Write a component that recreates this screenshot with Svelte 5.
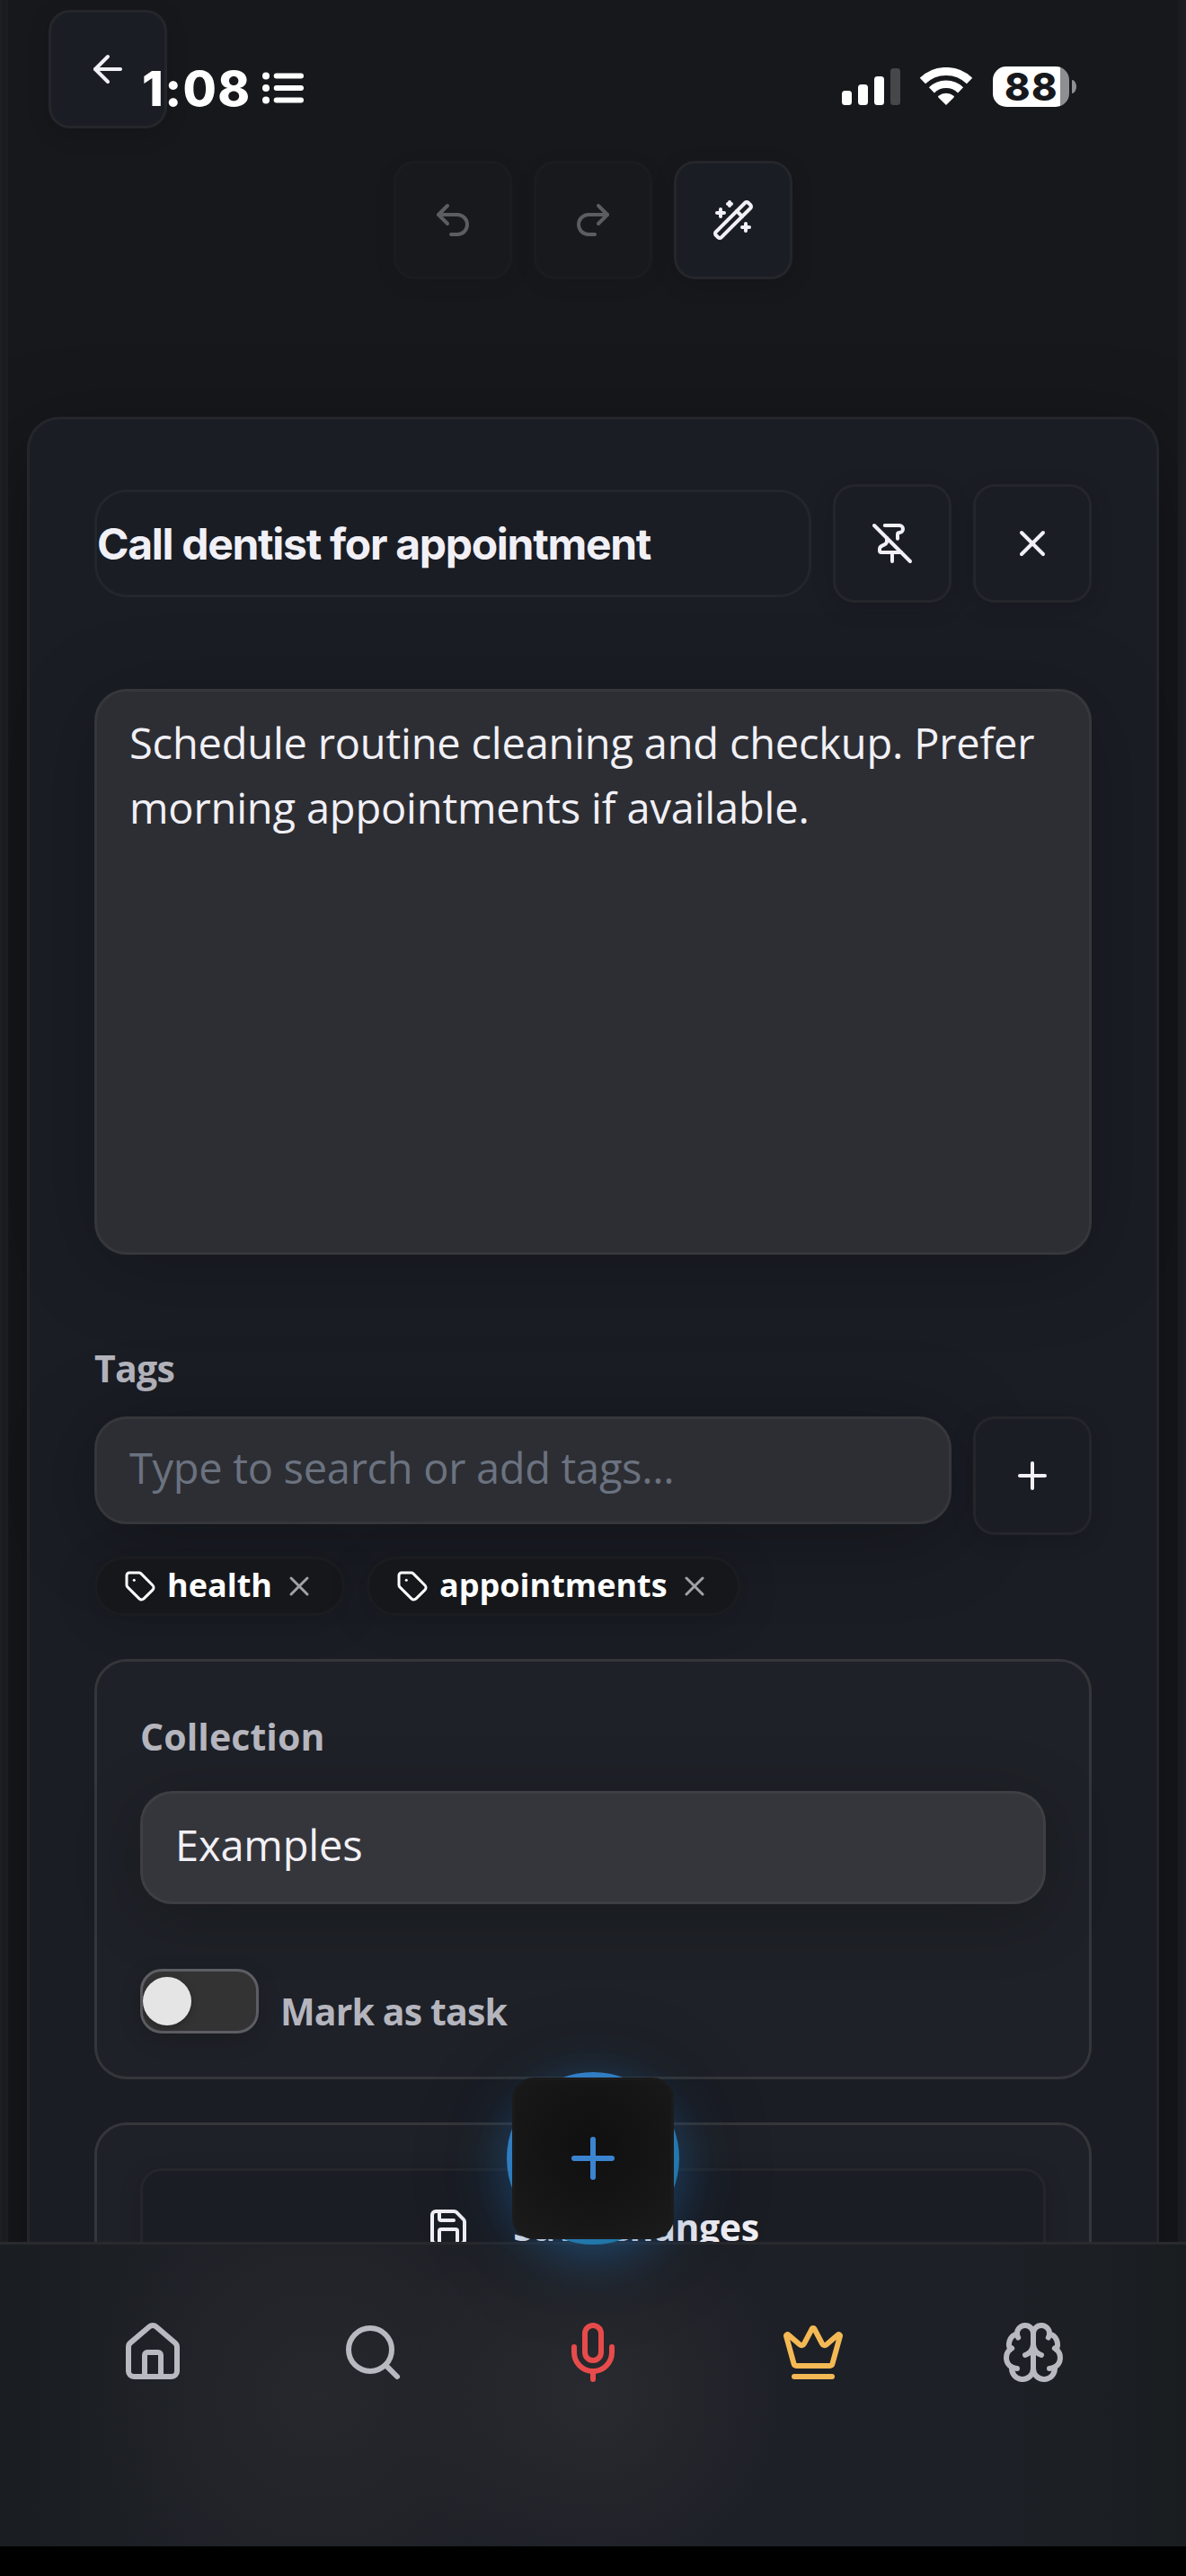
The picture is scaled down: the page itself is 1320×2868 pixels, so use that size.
<script>
  let title = $state('Call dentist for appointment');
  let isTask = $state(false);
  let tags = $state(['health', 'appointments']);

  const icons = {
    back: ['m12 19-7-7 7-7', 'M19 12H5'],
    undo: ['M9 14 4 9l5-5', 'M4 9h10.5a5.5 5.5 0 0 1 5.5 5.5a5.5 5.5 0 0 1-5.5 5.5H11'],
    redo: ['m15 14 5-5-5-5', 'M20 9H9.5A5.5 5.5 0 0 0 4 14.5A5.5 5.5 0 0 0 9.5 20H13'],
    wand: [
      'm21.64 3.64-1.28-1.28a1.21 1.21 0 0 0-1.72 0L2.36 18.64a1.21 1.21 0 0 0 0 1.72l1.28 1.28a1.2 1.2 0 0 0 1.72 0L21.64 5.36a1.2 1.2 0 0 0 0-1.72',
      'm14 7 3 3', 'M5 6v4', 'M19 14v4', 'M10 2v2', 'M7 8H3', 'M21 16h-4', 'M11 3H9'
    ],
    pinOff: [
      'M12 17v5', 'M15 9.34V7a1 1 0 0 1 1-1 2 2 0 0 0 0-4H7.89', 'm2 2 20 20',
      'M9 9v1.76a2 2 0 0 1-1.11 1.79l-1.78.9A2 2 0 0 0 5 15.24V16a1 1 0 0 0 1 1h11'
    ],
    close: ['M18 6 6 18', 'm6 6 12 12'],
    plus: ['M5 12h14', 'M12 5v14'],
    tag: [
      'M12.586 2.586A2 2 0 0 0 11.172 2H4a2 2 0 0 0-2 2v7.172a2 2 0 0 0 .586 1.414l8.704 8.704a2.426 2.426 0 0 0 3.42 0l6.58-6.58a2.426 2.426 0 0 0 0-3.42z',
      'M7.5 7.5h.01'
    ],
    save: [
      'M15.2 3a2 2 0 0 1 1.4.6l3.8 3.8a2 2 0 0 1 .6 1.4V19a2 2 0 0 1-2 2H5a2 2 0 0 1-2-2V5a2 2 0 0 1 2-2z',
      'M17 21v-7a1 1 0 0 0-1-1H8a1 1 0 0 0-1 1v7', 'M7 3v4a1 1 0 0 0 1 1h7'
    ],
    home: [
      'M15 21v-8a1 1 0 0 0-1-1h-4a1 1 0 0 0-1 1v8',
      'M3 10a2 2 0 0 1 .709-1.528l7-5.999a2 2 0 0 1 2.582 0l7 5.999A2 2 0 0 1 21 10v9a2 2 0 0 1-2 2H5a2 2 0 0 1-2-2z'
    ],
    search: ['M19 11a8 8 0 1 1-16 0a8 8 0 0 1 16 0', 'm21 21-4.3-4.3'],
    mic: ['M12 2a3 3 0 0 0-3 3v7a3 3 0 0 0 6 0V5a3 3 0 0 0-3-3Z', 'M19 10v2a7 7 0 0 1-14 0v-2', 'M12 19v3'],
    crown: [
      'M11.562 3.266a.5.5 0 0 1 .876 0L15.39 8.87a1 1 0 0 0 1.516.294L21.183 5.5a.5.5 0 0 1 .798.519l-2.834 10.246a1 1 0 0 1-.956.734H5.81a1 1 0 0 1-.957-.734L2.02 6.02a.5.5 0 0 1 .798-.519l4.276 3.664a1 1 0 0 0 1.516-.294z',
      'M5 21h14'
    ],
    brain: [
      'M12 5a3 3 0 1 0-5.997.125 4 4 0 0 0-2.526 5.77 4 4 0 0 0 .556 6.588A4 4 0 1 0 12 18Z',
      'M12 5a3 3 0 1 1 5.997.125 4 4 0 0 1 2.526 5.77 4 4 0 0 1-.556 6.588A4 4 0 1 1 12 18Z',
      'M15 13a4.5 4.5 0 0 1-3-4 4.5 4.5 0 0 1-3 4', 'M17.599 6.5a3 3 0 0 0 .399-1.375',
      'M6.003 5.125A3 3 0 0 0 6.401 6.5', 'M3.477 10.896a4 4 0 0 1 .585-.396',
      'M19.938 10.5a4 4 0 0 1 .585.396', 'M6 18a4 4 0 0 1-1.967-.516', 'M19.967 17.484A4 4 0 0 1 18 18'
    ]
  };

  const nav = [
    { icon: 'home', tone: 'muted', label: 'Home' },
    { icon: 'search', tone: 'muted', label: 'Search' },
    { icon: 'mic', tone: 'red', label: 'Record' },
    { icon: 'crown', tone: 'gold', label: 'Premium' },
    { icon: 'brain', tone: 'muted', label: 'Assistant' }
  ];

  function removeTag(tag) {
    tags = tags.filter((t) => t !== tag);
  }
</script>

{#snippet icon(name, size)}
  <svg class="icon {size}" viewBox="0 0 24 24" aria-hidden="true">
    {#each icons[name] as d}<path {d} />{/each}
  </svg>
{/snippet}

<div class="screen">
  <main class="page">
    <header class="top">
      <button class="square" aria-label="Back">{@render icon('back', 'md')}</button>
    </header>

    <div class="toolbar">
      <button class="square" disabled aria-label="Undo">{@render icon('undo', 'md')}</button>
      <button class="square" disabled aria-label="Redo">{@render icon('redo', 'md')}</button>
      <button class="square" aria-label="Enhance">{@render icon('wand', 'md')}</button>
    </div>

    <section class="card">
      <div class="row title-row">
        <div class="title">{title}</div>
        <button class="square" aria-label="Unpin">{@render icon('pinOff', 'md')}</button>
        <button class="square" aria-label="Close">{@render icon('close', 'md')}</button>
      </div>

      <div class="body-text">Schedule routine cleaning and checkup. Prefer<br /><span class="line2">morning appointments if available.</span></div>

      <div class="label tags-label"><span class="tight">Tags</span></div>
      <div class="row tag-row">
        <div class="field tag-input">Type to search or add tags...</div>
        <button class="square" aria-label="Add tag">{@render icon('plus', 'md')}</button>
      </div>

      <div class="chips">
        {#each tags as tag}
          <span class="chip">
            {@render icon('tag', 'sm')}
            <span class="chip-text">{tag}</span>
            <button class="chip-x" aria-label="Remove" onclick={() => removeTag(tag)}>{@render icon('close', 'sm')}</button>
          </span>
        {/each}
      </div>

      <div class="panel collection">
        <div class="label">Collection</div>
        <div class="field select">Examples</div>
        <div class="task">
          <button class="toggle" class:on={isTask} aria-label="Mark as task" onclick={() => (isTask = !isTask)}>
            <span class="knob"></span>
          </button>
          <span class="label task-label">Mark as task</span>
        </div>
      </div>

      <div class="panel actions">
        <button class="save">{@render icon('save', 'md')}<span class="save-text">Save Changes</span></button>
      </div>
    </section>
  </main>

  <div class="bottom">
    <nav>
      {#each nav as item}
        <button class="nav-item {item.tone}" aria-label={item.label}>{@render icon(item.icon, 'lg')}</button>
      {/each}
    </nav>
    <div class="fab">
      <button class="fab-face" aria-label="New note">{@render icon('plus', 'lg')}</button>
    </div>
  </div>

  <div class="status">
    <div class="status-left">
      <span class="time">1:08</span>
      <svg class="list" viewBox="0 0 46 36" aria-hidden="true">
        <g fill="#fff">
          <circle cx="4" cy="4.5" r="4" /><circle cx="4" cy="18" r="4" /><circle cx="4" cy="31.5" r="4" />
          <rect x="12.7" y="1.4" width="33.3" height="6.2" rx="3" />
          <rect x="12.7" y="14.9" width="33.3" height="6.2" rx="3" />
          <rect x="12.7" y="28.4" width="33.3" height="6.2" rx="3" />
        </g>
      </svg>
    </div>
    <div class="status-right">
      <svg class="signal" viewBox="0 0 65 42" aria-hidden="true">
        <rect x="0" y="26" width="11" height="16" rx="3.5" fill="#fff" />
        <rect x="18" y="19" width="11" height="23" rx="3.5" fill="#fff" />
        <rect x="36" y="10" width="11" height="32" rx="3.5" fill="#fff" />
        <rect x="54" y="1" width="11" height="41" rx="3.5" fill="#464749" />
      </svg>
      <svg class="wifi" viewBox="0 0 58 42" aria-hidden="true">
        <g fill="none" stroke="#fff">
          <path d="M2.9 15a37.5 37.5 0 0 1 52.2 0" stroke-width="9" />
          <path d="M12.9 25.3a23.2 23.2 0 0 1 32.2 0" stroke-width="8.6" />
        </g>
        <path d="M29 42l-8.6-8.6q-.8-.9.1-1.6a13.4 13.4 0 0 1 17 0q.9.7.1 1.6z" fill="#fff" />
      </svg>
      <div class="battery">
        <div class="cell"><span class="pct">88</span></div>
        <i class="nub"></i>
      </div>
    </div>
  </div>
</div>

<style>
  :global(body) {
    background: #000;
  }
  .screen {
    position: relative;
    width: 1320px;
    height: 2868px;
    overflow: hidden;
    background: linear-gradient(90deg, #1d1e22 0 3px, #1a1b1f 3px 6px, #1c1d21 6px 9px, #17181c 9px 1311px, #1b1c20 1311px 1317px, #1d1e22 1317px);
    color: #f1f0f6;
    font-family: 'Open Sans', 'Noto Sans', sans-serif;
  }
  .screen *,
  .page {
    box-sizing: border-box;
  }
  button {
    font: inherit;
    color: inherit;
    padding: 0;
    margin: 0;
    border: 0;
    background: none;
  }
  .page {
    margin: 0 9px;
    padding: 11px 21px 0;
    height: 2496px;
    overflow: hidden;
  }
  .icon {
    display: block;
    flex: none;
    fill: none;
    stroke: currentColor;
    stroke-width: 2;
    stroke-linecap: round;
    stroke-linejoin: round;
  }
  .sm { width: 36px; height: 36px; }
  .md { width: 48px; height: 48px; }
  .lg { width: 72px; height: 72px; }

  .square {
    display: grid;
    place-items: center;
    flex: none;
    width: 132px;
    height: 132px;
    border: 3px solid #24262b;
    border-radius: 24px;
    background: #1a1d24;
    box-shadow: 0 6px 24px rgba(0, 0, 0, 0.15);
  }
  .square:disabled {
    color: #5c5d61;
    background: #18191d;
    border-color: #1b1c20;
    box-shadow: 0 6px 24px rgba(0, 0, 0, 0.07);
  }
  .top {
    padding-left: 24px;
  }
  .toolbar {
    display: flex;
    justify-content: center;
    gap: 24px;
    margin-top: 36px;
  }
  .row {
    display: flex;
    gap: 24px;
  }

  .card {
    margin-top: 153px;
    height: 2500px;
    padding: 72px;
    border: 3px solid #24262c;
    border-radius: 36px;
    background: #1a1d24;
    box-shadow: 0 24px 96px rgba(0, 0, 0, 0.38);
  }
  .title-row {
    align-items: center;
  }
  .title {
    flex: 1;
    height: 120px;
    border: 3px solid #23262b;
    border-radius: 36px;
    background: #1a1d24;
    font: 700 48px/116px Inter, sans-serif;
    letter-spacing: -1.3px;
    white-space: nowrap;
  }
  .body-text {
    margin-top: 96px;
    height: 630px;
    padding: 21px 36px;
    border: 3px solid #36373b;
    border-radius: 36px;
    background: #2d2e33;
    box-shadow: 0 12px 96px rgba(0, 0, 0, 0.22);
    font-size: 47px;
    line-height: 72px;
    letter-spacing: -0.2px;
    white-space: nowrap;
  }
  .line2 {
    letter-spacing: -0.17px;
  }
  .label {
    font-size: 41px;
    font-weight: 700;
    line-height: 62px;
    letter-spacing: 0.1px;
    color: #b5b5be;
  }
  .tags-label {
    margin-top: 95px;
  }
  .tight {
    letter-spacing: -0.7px;
  }
  .field {
    border: 3px solid #36373b;
    border-radius: 36px;
    background: #2d2e33;
    box-shadow: 0 12px 96px rgba(0, 0, 0, 0.3);
    padding: 0 36px;
    font-size: 47px;
    letter-spacing: -0.3px;
    white-space: nowrap;
  }
  .tag-row {
    margin-top: 23px;
    align-items: flex-start;
  }
  .tag-input {
    flex: 1;
    height: 120px;
    line-height: 109px;
    color: #6b7280;
  }
  .chips {
    display: flex;
    gap: 24px;
    margin-top: 24px;
  }
  .chip {
    display: flex;
    align-items: center;
    height: 66px;
    padding: 0 30px;
    border: 3px solid #1b1c20;
    border-radius: 36px;
    background: #16171b;
    box-shadow: 0 6px 48px rgba(0, 0, 0, 0.16);
    color: #fff;
    font-size: 36px;
    font-weight: 700;
  }
  .chip-text {
    padding: 0 12px 3px 12px;
  }
  .chip-x {
    color: #a2a2a5;
  }

  .panel {
    border: 3px solid #34363a;
    border-radius: 36px;
    background: #1e2127;
    padding: 48px;
  }
  .collection {
    margin-top: 48px;
    height: 468px;
    padding-top: 52px;
  }
  .select {
    margin-top: 30px;
    height: 126px;
    line-height: 115px;
    background: #35363b;
    border-color: #3e3f44;
    box-shadow: 0 12px 72px rgba(0, 0, 0, 0.22);
    letter-spacing: -0.17px;
  }
  .task {
    display: flex;
    gap: 24px;
    margin-top: 72px;
  }
  .toggle {
    width: 132px;
    height: 72px;
    display: flex;
    align-items: center;
    border: 3px solid #5d5e64;
    border-radius: 24px;
    background: #333;
    box-shadow: 0 6px 24px rgba(0, 0, 0, 0.15);
  }
  .toggle.on {
    justify-content: flex-end;
  }
  .knob {
    width: 54px;
    height: 54px;
    border-radius: 50%;
    background: #e5e5e5;
    box-shadow: 0 3px 9px rgba(0, 0, 0, 0.25);
  }
  .task-label {
    padding-top: 16px;
    letter-spacing: -0.85px;
  }
  .actions {
    margin-top: 48px;
    height: 420px;
  }
  .save {
    display: flex;
    align-items: center;
    justify-content: center;
    gap: 48px;
    width: 100%;
    height: 132px;
    border: 3px solid #24262b;
    border-radius: 24px;
    background: #1a1d24;
    box-shadow: 0 6px 24px rgba(0, 0, 0, 0.15);
    font-size: 41px;
    font-weight: 700;
    letter-spacing: -0.4px;
  }
  .save-text {
    padding-bottom: 3px;
  }

  .bottom {
    position: absolute;
    left: 0;
    right: 0;
    bottom: 33px;
    height: 339px;
    border-top: 3px solid #282a2e;
    background:
      radial-gradient(circle at 355px 169px, rgba(41, 43, 47, 0.7), rgba(41, 43, 47, 0) 270px),
      radial-gradient(circle at 660px 166px, rgba(43, 45, 50, 0.8), rgba(43, 45, 50, 0) 220px),
      linear-gradient(90deg, #1a1d21, #1d2026 220px 1100px, #1a1d20);
    box-shadow: 0 33px #000;
  }
  nav {
    display: flex;
    padding: 84px 48px 0;
  }
  .nav-item {
    flex: 1;
    display: flex;
    justify-content: center;
  }
  .muted { color: #b9b9c1; }
  .red { color: #e84b4b; }
  .gold { color: #f4b955; }

  .fab {
    position: absolute;
    left: 564px;
    top: -192px;
    width: 192px;
    height: 192px;
    display: grid;
    place-items: center;
    border-radius: 50%;
    background: linear-gradient(145deg, #3680ce, #1f76a6 85%);
    box-shadow:
      0 12px 60px rgba(33, 115, 195, 0.5),
      0 12px 120px rgba(0, 0, 0, 0.2);
  }
  .fab-face {
    width: 180px;
    height: 180px;
    display: grid;
    place-items: center;
    border-radius: 24px;
    border: 3px solid #1b1b1c;
    background: radial-gradient(circle at 50% 42%, #101011, #141415 45%, #1b1b1c 100%);
    color: #3b84d0;
  }

  .status {
    position: absolute;
    top: 60px;
    left: 0;
    right: 0;
    height: 76px;
    display: flex;
    justify-content: space-between;
    padding: 0 122px 0 158px;
    color: #fff;
  }
  .status-left,
  .status-right {
    display: flex;
  }
  .time {
    width: 134px;
    font: 800 54px/77px Inter, sans-serif;
    letter-spacing: 1.3px;
  }
  .list {
    width: 46px;
    height: 36px;
    margin-top: 19.5px;
  }
  .signal {
    width: 65px;
    height: 42px;
    margin-top: 15px;
  }
  .wifi {
    width: 58px;
    height: 42px;
    margin: 15px 0 0 22px;
  }
  .battery {
    display: flex;
    align-items: center;
    height: 45px;
    margin: 14px 0 0 23px;
  }
  .cell {
    width: 85px;
    height: 45px;
    border-radius: 15px;
    background: linear-gradient(90deg, #fff 75px, #8e8f93 75px);
    color: #17181c;
    font: 800 43px/45px Inter, sans-serif;
    letter-spacing: 1.5px;
    padding-left: 13px;
  }
  .nub {
    width: 5px;
    height: 15px;
    margin-left: 3px;
    border-radius: 0 5px 5px 0 / 0 7.5px 7.5px 0;
    background: #8e8f93;
  }
</style>
